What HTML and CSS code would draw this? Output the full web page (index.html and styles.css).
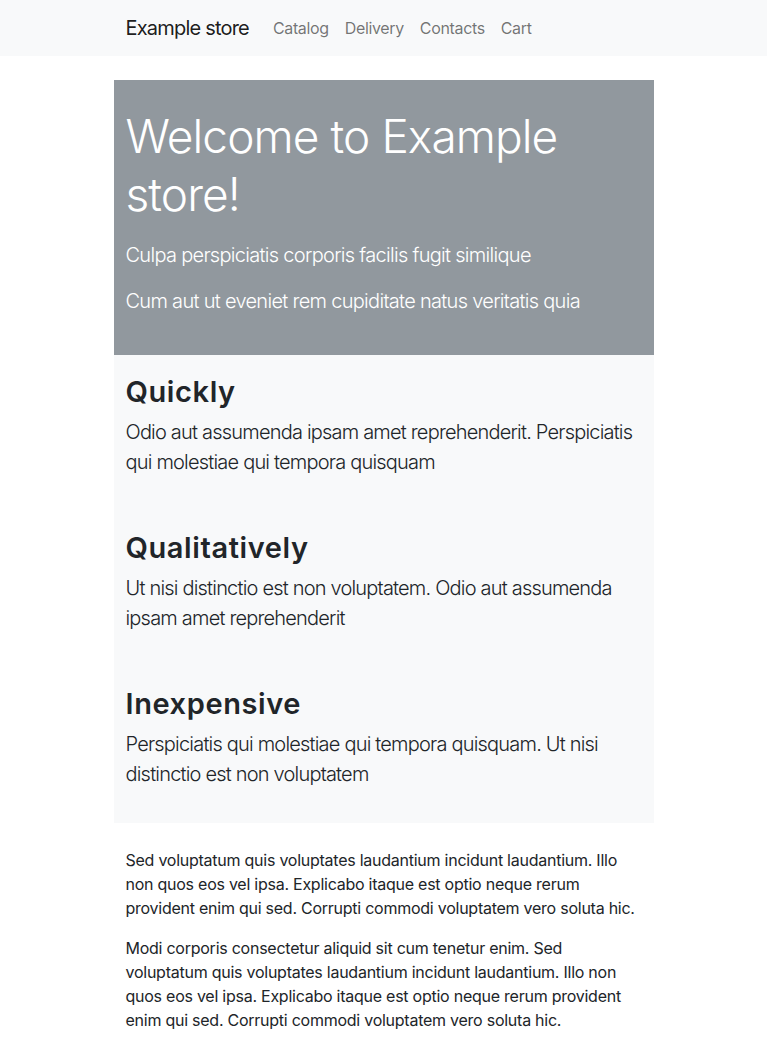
FILE: index.html
```html
<!DOCTYPE html>
<html lang="en">
<head>
<meta charset="utf-8">
<title>Example store</title>
<link rel="stylesheet" href="styles.css">
</head>
<body>
<nav class="navbar">
  <div class="container nav-inner">
    <a class="brand" href="#">Example store</a>
    <ul class="nav-links">
      <li><a href="#">Catalog</a></li>
      <li><a href="#">Delivery</a></li>
      <li><a href="#">Contacts</a></li>
      <li><a href="#">Cart</a></li>
    </ul>
  </div>
</nav>
<main class="container main">
  <section class="hero">
    <h1 class="hero-title">Welcome to Example store!</h1>
    <p class="lead-light">Culpa perspiciatis corporis facilis fugit similique</p>
    <p class="lead-light">Cum aut ut eveniet rem cupiditate natus veritatis quia</p>
  </section>
  <section class="features">
    <div class="feature">
      <h2>Quickly</h2>
      <p class="lead">Odio aut assumenda ipsam amet reprehenderit. Perspiciatis qui molestiae qui tempora quisquam</p>
    </div>
    <div class="feature">
      <h2>Qualitatively</h2>
      <p class="lead">Ut nisi distinctio est non voluptatem. Odio aut assumenda ipsam amet reprehenderit</p>
    </div>
    <div class="feature">
      <h2>Inexpensive</h2>
      <p class="lead">Perspiciatis qui molestiae qui tempora quisquam. Ut nisi distinctio est non voluptatem</p>
    </div>
  </section>
  <section class="about">
    <p>Sed voluptatum quis voluptates laudantium incidunt laudantium. Illo non quos eos vel ipsa. Explicabo itaque est optio neque rerum provident enim qui sed. Corrupti commodi voluptatem vero soluta hic.</p>
    <p>Modi corporis consectetur aliquid sit cum tenetur enim. Sed voluptatum quis voluptates laudantium incidunt laudantium. Illo non quos eos vel ipsa. Explicabo itaque est optio neque rerum provident enim qui sed. Corrupti commodi voluptatem vero soluta hic.</p>
  </section>
</main>
</body>
</html>
```

FILE: styles.css
```css
* { box-sizing: border-box; }

body {
  margin: 0;
  font-family: Inter, "Noto Sans", "Liberation Sans", sans-serif;
  font-size: 16px;
  line-height: 1.5;
  color: #212529;
  background: #fff;
}

.container {
  width: 540px;
  margin: 0 auto;
}

.navbar {
  background: #f8f9fa;
  padding: 8px 0;
}

.nav-inner {
  display: flex;
  align-items: center;
  padding: 0 12px;
}

.brand {
  font-size: 20px;
  line-height: 30px;
  padding: 5px 0;
  margin-right: 16px;
  color: rgba(0, 0, 0, 0.9);
  text-decoration: none;
  letter-spacing: -0.8px;
}

.nav-links {
  display: flex;
  list-style: none;
  margin: 0;
  padding: 0;
}

.nav-links a {
  display: block;
  padding: 8px;
  line-height: 24px;
  color: rgba(0, 0, 0, 0.55);
  text-decoration: none;
  letter-spacing: -0.35px;
}

.main {
  margin-top: 24px;
}

.hero {
  background: #91989e;
  color: #fff;
  padding: 27px 12px 23px;
}

.hero-title {
  font-size: 46px;
  font-weight: 300;
  line-height: 58px;
  margin: 0 0 17px;
  letter-spacing: -0.9px;
}

.lead-light {
  font-size: 20px;
  font-weight: 300;
  margin: 0 0 16px;
  letter-spacing: -0.7px;
}

.features {
  background: #f8f9fa;
}

.feature {
  padding: 20px 12px 18px;
}

.feature h2 {
  font-size: 29px;
  font-weight: 600;
  line-height: 34px;
  margin: 0 0 8px;
  letter-spacing: 0.6px;
}

.lead {
  font-size: 20px;
  font-weight: 300;
  margin: 0 0 16px;
  letter-spacing: -0.8px;
}

.about {
  padding: 25px 12px 0;
}

.about p {
  margin: 0 0 16px;
  letter-spacing: -0.25px;
}
```
